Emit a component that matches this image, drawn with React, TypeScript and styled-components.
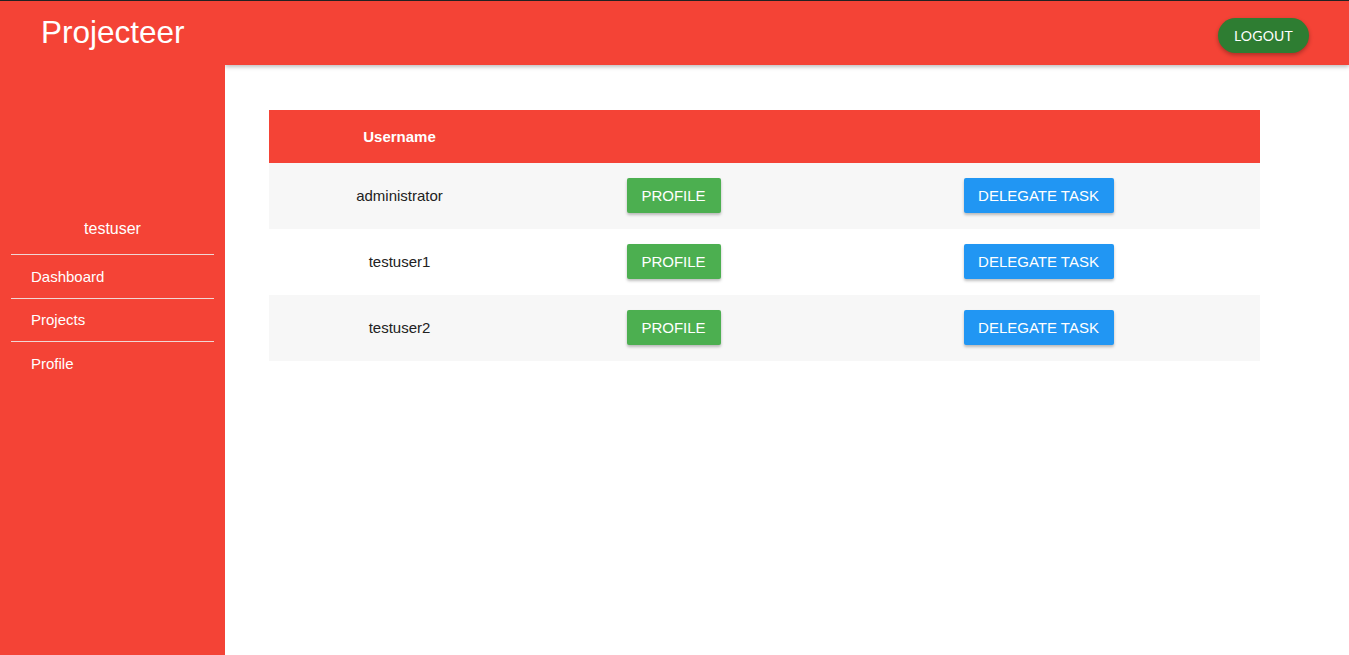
import React from "react";
import styled, { createGlobalStyle } from "styled-components";

const Global = createGlobalStyle`
  html, body { margin: 0; padding: 0; background: #fff; }
  body { font-family: "Liberation Sans", Arial, sans-serif; }
  * { box-sizing: border-box; }
`;

const RED = "#f44336";

const Page = styled.div`
  display: flex;
  height: 655px;
  border-top: 1px solid #222;
  overflow: hidden;
`;

const Sidebar = styled.aside`
  position: relative;
  z-index: 2;
  width: 225px;
  flex-shrink: 0;
  background: ${RED};
  color: #fff;
  display: flex;
  flex-direction: column;
`;

const Brand = styled.div`
  height: 64px;
  padding-left: 41px;
  display: flex;
  align-items: center;
  font-size: 31.5px;
  padding-bottom: 2px;
`;

const UserName = styled.div`
  margin-top: 155px;
  text-align: center;
  font-size: 16px;
  line-height: 18px;
  padding-bottom: 16px;
`;

const Nav = styled.nav`
  display: flex;
  flex-direction: column;
  margin: 0 11px;
`;

const NavItem = styled.a`
  display: flex;
  align-items: center;
  height: 43.5px;
  padding-left: 20px;
  font-size: 15px;
  color: #fff;
  text-decoration: none;
  border-top: 1px solid #f0d6d4;
`;

const Main = styled.div`
  flex: 1;
  display: flex;
  flex-direction: column;
`;

const TopBar = styled.header`
  position: relative;
  z-index: 1;
  height: 64px;
  background: ${RED};
  box-shadow: 0 2px 4px rgba(0, 0, 0, 0.25);
  display: flex;
  align-items: center;
  justify-content: flex-end;
  padding-right: 40px;
`;

const LogoutButton = styled.button`
  width: 91px;
  height: 35px;
  margin-top: 4px;
  border: none;
  border-radius: 18px;
  background: #2e7d32;
  color: #fff;
  font-family: Lato, "Open Sans", sans-serif;
  font-size: 14px;
  letter-spacing: 0.2px;
  box-shadow: 0 2px 4px rgba(0, 0, 0, 0.3);
  cursor: pointer;
`;

const Content = styled.main`
  padding: 45px 89px 0 44px;
`;

const Table = styled.table`
  width: 991px;
  border-collapse: collapse;
  table-layout: fixed;
`;

const HeadCell = styled.th<{ $w: number }>`
  width: ${(p) => p.$w}px;
  height: 53px;
  background: ${RED};
  color: #fff;
  font-size: 15px;
  font-weight: bold;
  text-align: center;
`;

const Row = styled.tr<{ $striped: boolean }>`
  background: ${(p) => (p.$striped ? "#f7f7f7" : "#fff")};
`;

const Cell = styled.td`
  height: 66px;
  text-align: center;
  font-size: 15px;
  color: #222;
  padding: 0 0 2px 0;
`;

const ActionButton = styled.button<{ $color: string; $w: number }>`
  width: ${(p) => p.$w}px;
  height: 35px;
  border: none;
  border-radius: 2px;
  background: ${(p) => p.$color};
  color: #fff;
  font-family: "Liberation Sans", Arial, sans-serif;
  font-size: 15px;
  text-transform: uppercase;
  box-shadow: 0 2px 3px rgba(0, 0, 0, 0.25);
  cursor: pointer;
`;

const users = ["administrator", "testuser1", "testuser2"];

export default function App() {
  return (
    <>
      <Global />
      <Page>
        <Sidebar>
          <Brand>Projecteer</Brand>
          <UserName>testuser</UserName>
          <Nav>
            <NavItem href="#">Dashboard</NavItem>
            <NavItem href="#">Projects</NavItem>
            <NavItem href="#">Profile</NavItem>
          </Nav>
        </Sidebar>
        <Main>
          <TopBar>
            <LogoutButton>LOGOUT</LogoutButton>
          </TopBar>
          <Content>
            <Table>
              <thead>
                <tr>
                  <HeadCell $w={261}>Username</HeadCell>
                  <HeadCell $w={287}></HeadCell>
                  <HeadCell $w={443}></HeadCell>
                </tr>
              </thead>
              <tbody>
                {users.map((u, i) => (
                  <Row key={u} $striped={i % 2 === 0}>
                    <Cell>{u}</Cell>
                    <Cell>
                      <ActionButton $color="#4caf50" $w={94}>Profile</ActionButton>
                    </Cell>
                    <Cell>
                      <ActionButton $color="#2196f3" $w={150}>Delegate Task</ActionButton>
                    </Cell>
                  </Row>
                ))}
              </tbody>
            </Table>
          </Content>
        </Main>
      </Page>
    </>
  );
}
